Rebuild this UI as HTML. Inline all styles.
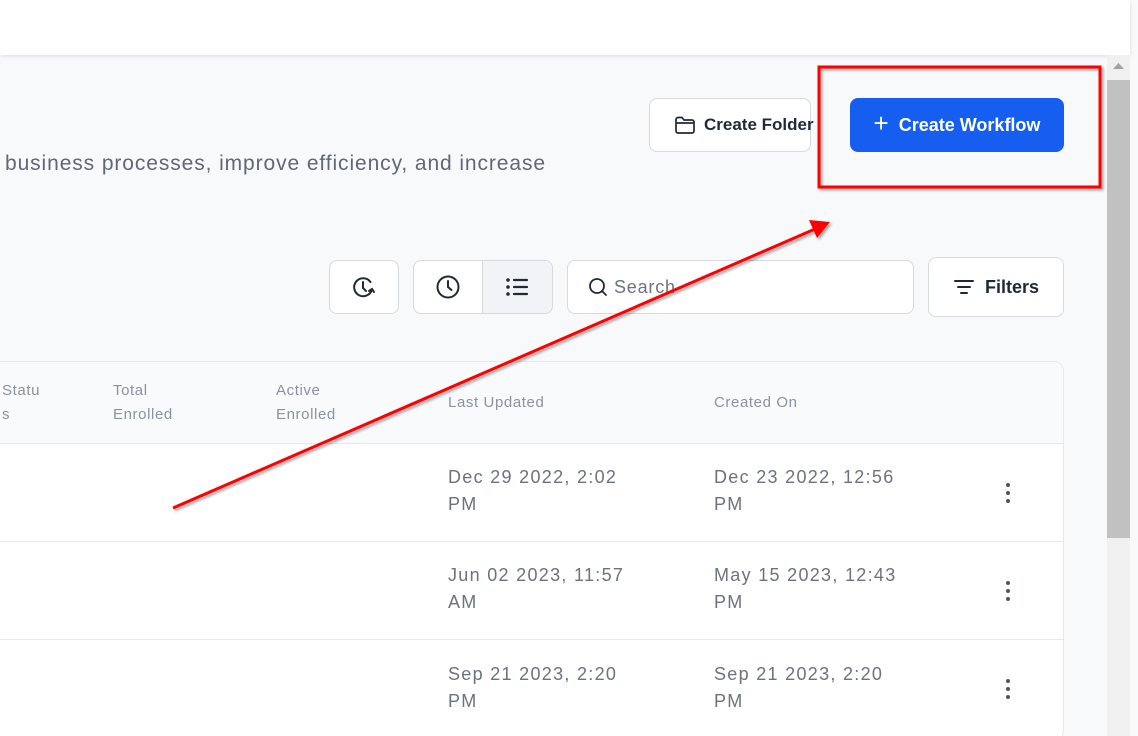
<!DOCTYPE html>
<html><head><meta charset="utf-8"><style>
*{box-sizing:border-box;margin:0;padding:0}
html,body{width:1138px;height:736px;overflow:hidden}
body{background:#f8f9fb;font-family:"Liberation Sans",sans-serif;position:relative}
.top{position:absolute;left:0;top:0;width:1130px;height:55px;background:#fff;box-shadow:0 1px 4px rgba(0,0,0,.12)}
.abs{position:absolute}
.btn{position:absolute;background:#fff;border:1px solid #d5d9e0;border-radius:8px;display:flex;align-items:center;justify-content:center;color:#1f2937;white-space:nowrap;overflow:hidden}
.desc{left:5px;top:152px;font-size:21px;letter-spacing:0.9px;color:#5f6878;white-space:nowrap}
.card{position:absolute;left:-10px;top:361px;width:1074px;height:380px;background:#fff;border:1px solid #e6e8ec;border-radius:10px;overflow:hidden}
.hd{position:absolute;left:0;top:0;width:100%;height:82px;background:#f9fafb;border-bottom:1px solid #e6e8ec}
.row{position:absolute;left:0;width:100%;height:98px;border-bottom:1px solid #e6e8ec}
.h{position:absolute;font-size:15px;letter-spacing:0.6px;color:#8a92a3;line-height:24px}
.d{position:absolute;font-size:18px;letter-spacing:1.3px;color:#6b7280;line-height:27px;white-space:nowrap}
.dots{position:absolute;width:4px}
.dots i{display:block;width:4px;height:4px;border-radius:50%;background:#4b5563;margin-bottom:4px}
.sb{position:absolute;left:1107px;top:55px;width:23px;height:681px;background:#f0f0f0}
.th{position:absolute;left:1107px;top:80px;width:23px;height:458px;background:#c1c1c1}
</style></head><body>
<div class="top"></div>
<div class="abs desc">business processes, improve efficiency, and increase</div>

<div class="btn" style="left:649px;top:98px;width:162px;height:54px;overflow:visible;font-size:17px;font-weight:bold;gap:8px;justify-content:flex-start;padding-left:24px">
<svg width="22" height="20" viewBox="0 0 22 20" fill="none" stroke="#1f2937" stroke-width="1.7" style="flex:none"><path d="M2 4.5a2 2 0 0 1 2-2h4l2 2.5h8a2 2 0 0 1 2 2v9a2 2 0 0 1-2 2H4a2 2 0 0 1-2-2z"/><path d="M2 8h18"/></svg>Create Folder</div>
<div class="abs" style="left:850px;top:98px;width:214px;height:54px;background:#155eef;border-radius:8px;color:#fff;font-size:18px;font-weight:bold;display:flex;align-items:center;justify-content:center;gap:10px;white-space:nowrap"><span style="font-size:26px;font-weight:normal;margin-top:-3px">+</span>Create Workflow</div>

<div class="btn" style="left:329px;top:260px;width:70px;height:54px">
<svg width="26" height="26" viewBox="0 0 26 26" fill="none" stroke="#1f2937" stroke-width="2" stroke-linecap="round"><path d="M21 15a9 9 0 1 1-1.5-7"/><path d="M12 8v6l3 3"/><path d="M18 17l3-2 2 3"/></svg></div>
<div class="btn" style="left:413px;top:260px;width:140px;height:54px;justify-content:flex-start">
<div style="width:69px;height:100%;display:flex;align-items:center;justify-content:center;border-right:1px solid #d5d9e0"><svg width="26" height="26" viewBox="0 0 26 26" fill="none" stroke="#1f2937" stroke-width="2" stroke-linecap="round"><circle cx="13" cy="13" r="10.5"/><path d="M13 7v6l3.5 3"/></svg></div>
<div style="width:70px;height:100%;background:#f1f3f6;display:flex;align-items:center;justify-content:center"><svg width="24" height="20" viewBox="0 0 24 20" stroke="#1f2937" stroke-width="2.2" stroke-linecap="round" fill="#1f2937"><circle cx="3" cy="3" r="1.8" stroke="none"/><circle cx="3" cy="10" r="1.8" stroke="none"/><circle cx="3" cy="17" r="1.8" stroke="none"/><path d="M9 3h13M9 10h13M9 17h13"/></svg></div></div>
<div class="btn" style="left:567px;top:260px;width:347px;height:54px;justify-content:flex-start;padding-left:20px;gap:6px;font-size:18px;letter-spacing:0.8px;color:#6b7280">
<svg width="20" height="20" viewBox="0 0 20 20" fill="none" stroke="#1f2937" stroke-width="1.8" stroke-linecap="round"><circle cx="9" cy="9" r="7"/><path d="M14 14l4 4"/></svg>Search</div>
<div class="btn" style="left:928px;top:257px;width:136px;height:60px;font-size:18px;font-weight:bold;gap:10px">
<svg width="22" height="18" viewBox="0 0 22 18" stroke="#1f2937" stroke-width="2" stroke-linecap="round"><path d="M2 3h18M5 9h12M8 15h6"/></svg>Filters</div>

<div class="card">
<div class="hd"></div>
<div class="h" style="left:11px;top:17px">Statu<br>s</div>
<div class="h" style="left:122px;top:17px">Total<br>Enrolled</div>
<div class="h" style="left:285px;top:17px">Active<br>Enrolled</div>
<div class="h" style="left:457px;top:29px">Last Updated</div>
<div class="h" style="left:723px;top:29px">Created On</div>
<div class="row" style="top:82px"></div>
<div class="row" style="top:180px"></div>
<div class="row" style="top:278px"></div>
<div class="d" style="left:457px;top:102px">Dec 29 2022, 2:02<br>PM</div>
<div class="d" style="left:723px;top:102px">Dec 23 2022, 12:56<br>PM</div>
<div class="d" style="left:457px;top:200px">Jun 02 2023, 11:57<br>AM</div>
<div class="d" style="left:723px;top:200px">May 15 2023, 12:43<br>PM</div>
<div class="d" style="left:457px;top:299px">Sep 21 2023, 2:20<br>PM</div>
<div class="d" style="left:723px;top:299px">Sep 21 2023, 2:20<br>PM</div>
<div class="dots" style="left:1015px;top:121px"><i></i><i></i><i></i></div>
<div class="dots" style="left:1015px;top:219px"><i></i><i></i><i></i></div>
<div class="dots" style="left:1015px;top:317px"><i></i><i></i><i></i></div>
</div>

<div class="sb"></div><div class="th"></div>
<svg class="abs" style="left:1112px;top:62px" width="13" height="8"><path d="M1 7L6.5 1 12 7z" fill="#a3a3a3"/></svg>

<svg class="abs" style="left:0;top:0" width="1138" height="736">
<defs><filter id="s" x="-10%" y="-10%" width="120%" height="120%"><feDropShadow dx="2" dy="2" stdDeviation="1.2" flood-color="#000" flood-opacity=".35"/></filter></defs>
<g filter="url(#s)">
<rect x="819" y="67" width="281" height="120" fill="none" stroke="#f00" stroke-width="3"/>
<line x1="173" y1="508" x2="815" y2="229" stroke="#f00" stroke-width="3"/>
<path d="M830 222 L809 220 L817 238 Z" fill="#f00"/>
</g></svg>
</body></html>
